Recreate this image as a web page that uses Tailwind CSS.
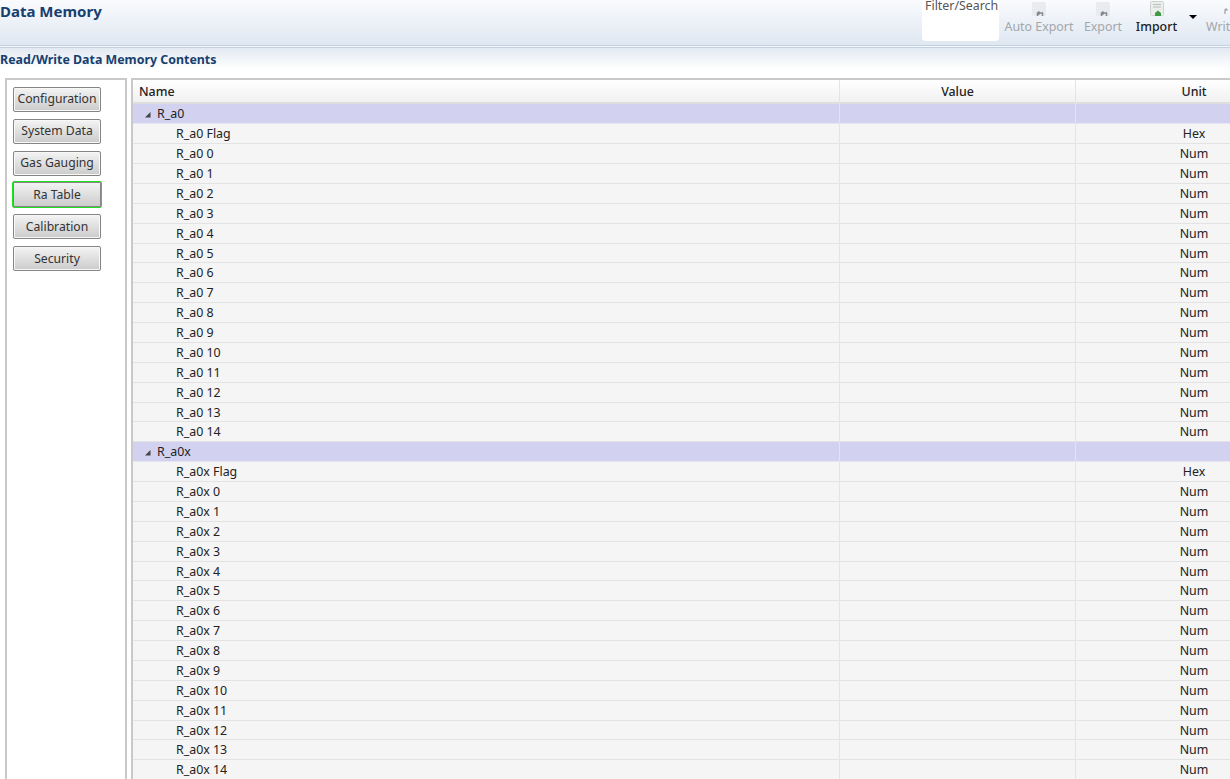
<!DOCTYPE html>
<html lang="en">
<head>
    <meta charset="UTF-8">
    <title>Data Memory</title>
    <script src="https://cdn.jsdelivr.net/npm/@tailwindcss/browser@4"></script>
</head>
<body class="bg-white">
    <div class="w-[1230px] h-[779px] overflow-hidden flex flex-col bg-white text-[12.4px] text-[#222] font-['Noto_Sans','Liberation_Sans',sans-serif]">

        <!-- title bar + toolbar -->
        <div class="h-[45px] shrink-0 flex bg-gradient-to-b from-[#fafbfd] to-[#dfe7f2]">
            <div class="w-[922px] shrink-0 text-[15px] font-bold text-[#17406f] leading-[22px]">Data Memory</div>
            <div class="w-[77px] h-[41px] shrink-0 bg-white rounded-b-sm text-[#555] leading-[12px] pl-[3px]">Filter/Search</div>
            <div class="ml-[5px] w-[70px] shrink-0 flex flex-col items-center text-[#a3a7ab]">
                <svg class="w-[14px] h-[14px] mt-[2px]" viewBox="0 0 14 14"><rect x="0" y="0" width="14" height="14" rx="1.500" fill="#e9ebee"/><path d="M5.500 14v-3h5v3M5.500 11l2-1.500M5.500 11l2 1.500" fill="none" stroke="#85888c" stroke-width="1.500"/></svg>
                <span class="leading-[21px]">Auto Export</span>
            </div>
            <div class="ml-[10px] w-[38px] shrink-0 flex flex-col items-center text-[#a3a7ab]">
                <svg class="w-[14px] h-[14px] mt-[2px]" viewBox="0 0 14 14"><rect x="0" y="0" width="14" height="14" rx="1.500" fill="#e9ebee"/><path d="M5.500 14v-3h5v3M5.500 11l2-1.500M5.500 11l2 1.500" fill="none" stroke="#85888c" stroke-width="1.500"/></svg>
                <span class="leading-[21px]">Export</span>
            </div>
            <div class="ml-[14px] w-[41px] shrink-0 flex flex-col items-center font-medium text-[#1c1c1c]">
                <svg class="w-[14px] h-[15px] mt-[1px]" viewBox="0 0 14 15"><rect x="0.500" y="0.500" width="13" height="14" rx="1" fill="#eceeec" stroke="#cfd3cf"/><path d="M3 3.500h8M3 6h8" stroke="#b9bfb9"/><path d="M5 15v-3l3-2.500 3 2.500v3z" fill="#3f9a46"/></svg>
                <span class="leading-[21px]">Import</span>
            </div>
            <div class="ml-[12px] mt-[15px] w-0 h-0 border-x-[4px] border-x-transparent border-t-[4px] border-t-black shrink-0"></div>
            <div class="ml-[9px] flex flex-col items-start text-[#a3a7ab] shrink-0">
                <svg class="w-[14px] h-[14px] mt-[2px] ml-[16px]" viewBox="0 0 14 14"><path d="M3 12V8h3M3 8l1.500-1.500" fill="none" stroke="#9a9da1" stroke-width="1.200"/></svg>
                <span class="leading-[21px]">Write</span>
            </div>
        </div>

        <!-- double rule -->
        <div class="h-[1px] shrink-0 bg-[#c3d0e0]"></div>
        <div class="h-[1px] shrink-0 bg-[#f5f8fb]"></div>
        <div class="h-[1px] shrink-0 bg-[#c3d0e0]"></div>

        <!-- section heading -->
        <div class="h-[21px] shrink-0 bg-gradient-to-b from-[#e3e9f2] to-white font-bold text-[#17406f] leading-[23px]">Read/Write Data Memory Contents</div>

        <div class="flex-1 min-h-0 flex pt-[9px] pl-[5px]">
            <!-- section buttons -->
            <div class="w-[122px] shrink-0 border-x-2 border-t-2 border-[#c9c9c9] pl-[6px] pt-[7px] flex flex-col gap-[7px] text-[12.2px]">
                <button class="w-[88px] h-[25px] rounded-[2px] border border-[#858585] bg-gradient-to-b from-[#f4f4f4] to-[#cbcbcb] text-[#333] shadow-[inset_0_0_0_1px_#f8f8f8]">Configuration</button>
                <button class="w-[88px] h-[25px] rounded-[2px] border border-[#858585] bg-gradient-to-b from-[#f4f4f4] to-[#cbcbcb] text-[#333] shadow-[inset_0_0_0_1px_#f8f8f8]">System Data</button>
                <button class="w-[88px] h-[25px] rounded-[2px] border border-[#858585] bg-gradient-to-b from-[#f4f4f4] to-[#cbcbcb] text-[#333] shadow-[inset_0_0_0_1px_#f8f8f8]">Gas Gauging</button>
                <button class="-mt-[2px] -mb-[1px] -ml-[1px] pt-[1px] w-[90px] h-[27px] rounded-[2px] border border-[#22e022] bg-gradient-to-b from-[#f4f4f4] to-[#cbcbcb] text-[#333] shadow-[inset_0_0_0_1px_#858585]">Ra Table</button>
                <button class="pt-[1px] w-[88px] h-[25px] rounded-[2px] border border-[#858585] bg-gradient-to-b from-[#f4f4f4] to-[#cbcbcb] text-[#333] shadow-[inset_0_0_0_1px_#f8f8f8]">Calibration</button>
                <button class="pt-[1px] w-[88px] h-[25px] rounded-[2px] border border-[#858585] bg-gradient-to-b from-[#f4f4f4] to-[#cbcbcb] text-[#333] shadow-[inset_0_0_0_1px_#f8f8f8]">Security</button>
            </div>

            <!-- memory table -->
            <div class="ml-[4px] flex-1 min-w-0 overflow-hidden border-l-2 border-t-2 border-[#c9c9c9]">
                <div class="w-[1179px] grid grid-cols-[707px_236px_236px] h-[24.4px] border-b-2 border-[#dedede] bg-gradient-to-b from-white to-[#f1f1f1] font-medium leading-[24px]">
                    <div class="pl-[6px] border-r border-[#e4e4e4]">Name</div>
                    <div class="text-center border-r border-[#e4e4e4]">Value</div>
                    <div class="text-center">Unit</div>
                </div>
                <div id="rows"></div>
            </div>
        </div>
    </div>

    <script>
        const groupRow = "w-[1179px] grid grid-cols-[707px_236px_236px] h-[19.88px] bg-[#d2d1ef] border-b border-[#e6e6f2] leading-[20px]";
        const itemRow = "w-[1179px] grid grid-cols-[707px_236px_236px] h-[19.88px] bg-[#f5f5f5] border-b border-[#e3e3e3] leading-[20px]";
        const cell = "border-r border-[#e4e4e4]";

        function addGroup(name) {
            let html = `<div class="${groupRow}"><div class="${cell} pl-[11px] flex items-center"><svg class="w-[7px] h-[7px] mr-[6px]" viewBox="0 0 7 7"><path d="M6.500 1v5.500H1z" fill="#444"/></svg>${name}</div><div class="${cell}"></div><div></div></div>`;
            const items = [[name + " Flag", "Hex"]];
            for (let i = 0; i < 15; i++) items.push([name + " " + i, "Num"]);
            for (const [label, unit] of items) {
                html += `<div class="${itemRow}"><div class="${cell} pl-[43px]">${label}</div><div class="${cell}"></div><div class="text-center">${unit}</div></div>`;
            }
            return html;
        }

        document.getElementById("rows").innerHTML = addGroup("R_a0") + addGroup("R_a0x");
    </script>
</body>
</html>
